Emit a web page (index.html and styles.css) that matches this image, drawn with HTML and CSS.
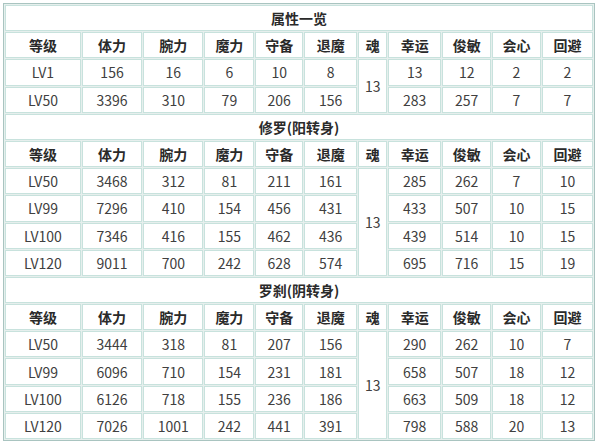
FILE: index.html
```html
<!DOCTYPE html>
<html lang="zh">
<head>
<meta charset="utf-8">
<link rel="stylesheet" href="styles.css">
</head>
<body>
<table class="stats">
<colgroup>
<col class="c-lv"><col class="c-w58"><col class="c-w58"><col class="c-w48"><col class="c-w46"><col class="c-w51"><col class="c-hun"><col class="c-w51"><col class="c-w47"><col class="c-w47"><col class="c-w49">
</colgroup>
<tbody>
<tr><td class="title" colspan="11">属性一览</td></tr>
<tr class="head"><td>等级</td><td>体力</td><td>腕力</td><td>魔力</td><td>守备</td><td>退魔</td><td>魂</td><td>幸运</td><td>俊敏</td><td>会心</td><td>回避</td></tr>
<tr><td>LV1</td><td>156</td><td>16</td><td>6</td><td>10</td><td>8</td><td rowspan="2">13</td><td>13</td><td>12</td><td>2</td><td>2</td></tr>
<tr><td>LV50</td><td>3396</td><td>310</td><td>79</td><td>206</td><td>156</td><td>283</td><td>257</td><td>7</td><td>7</td></tr>

<tr><td class="title" colspan="11">修罗(阳转身)</td></tr>
<tr class="head"><td>等级</td><td>体力</td><td>腕力</td><td>魔力</td><td>守备</td><td>退魔</td><td>魂</td><td>幸运</td><td>俊敏</td><td>会心</td><td>回避</td></tr>
<tr><td>LV50</td><td>3468</td><td>312</td><td>81</td><td>211</td><td>161</td><td rowspan="4">13</td><td>285</td><td>262</td><td>7</td><td>10</td></tr>
<tr><td>LV99</td><td>7296</td><td>410</td><td>154</td><td>456</td><td>431</td><td>433</td><td>507</td><td>10</td><td>15</td></tr>
<tr><td>LV100</td><td>7346</td><td>416</td><td>155</td><td>462</td><td>436</td><td>439</td><td>514</td><td>10</td><td>15</td></tr>
<tr><td>LV120</td><td>9011</td><td>700</td><td>242</td><td>628</td><td>574</td><td>695</td><td>716</td><td>15</td><td>19</td></tr>

<tr><td class="title" colspan="11">罗刹(阴转身)</td></tr>
<tr class="head"><td>等级</td><td>体力</td><td>腕力</td><td>魔力</td><td>守备</td><td>退魔</td><td>魂</td><td>幸运</td><td>俊敏</td><td>会心</td><td>回避</td></tr>
<tr><td>LV50</td><td>3444</td><td>318</td><td>81</td><td>207</td><td>156</td><td rowspan="4">13</td><td>290</td><td>262</td><td>10</td><td>7</td></tr>
<tr><td>LV99</td><td>6096</td><td>710</td><td>154</td><td>231</td><td>181</td><td>658</td><td>507</td><td>18</td><td>12</td></tr>
<tr><td>LV100</td><td>6126</td><td>718</td><td>155</td><td>236</td><td>186</td><td>663</td><td>509</td><td>18</td><td>12</td></tr>
<tr><td>LV120</td><td>7026</td><td>1001</td><td>242</td><td>441</td><td>391</td><td>798</td><td>588</td><td>20</td><td>13</td></tr>
</tbody>
</table>
</body>
</html>
```
FILE: styles.css
```css
html, body {
  margin: 0;
  padding: 0;
  background: #ffffff;
}
body {
  padding: 3px 0 0 3px;
  font-family: "Noto Sans CJK SC", "Noto Sans", sans-serif;
  color: #404040;
}
.stats {
  width: 592px;
  table-layout: fixed;
  border-collapse: separate;
  border-spacing: 1px;
  border: 1px solid #a9c4c0;
  background: #e6efed;
}
.c-lv { width: 73px; }
.c-w58 { width: 58px; }
.c-w48 { width: 48px; }
.c-w46 { width: 46px; }
.c-w51 { width: 51px; }
.c-hun { width: 28px; }
.c-w47 { width: 47px; }
.c-w49 { width: 49px; }
.stats td {
  background: #ffffff;
  border: 1px solid #c8e2dd;
  height: 24.2px;
  padding: 0;
  text-align: center;
  vertical-align: middle;
  font-size: 14px;
  line-height: 18px;
  white-space: nowrap;
}
.stats td.title {
  font-weight: bold;
  color: #2a2a2a;
}
.stats .head td {
  font-weight: bold;
  color: #2a2a2a;
}
```
